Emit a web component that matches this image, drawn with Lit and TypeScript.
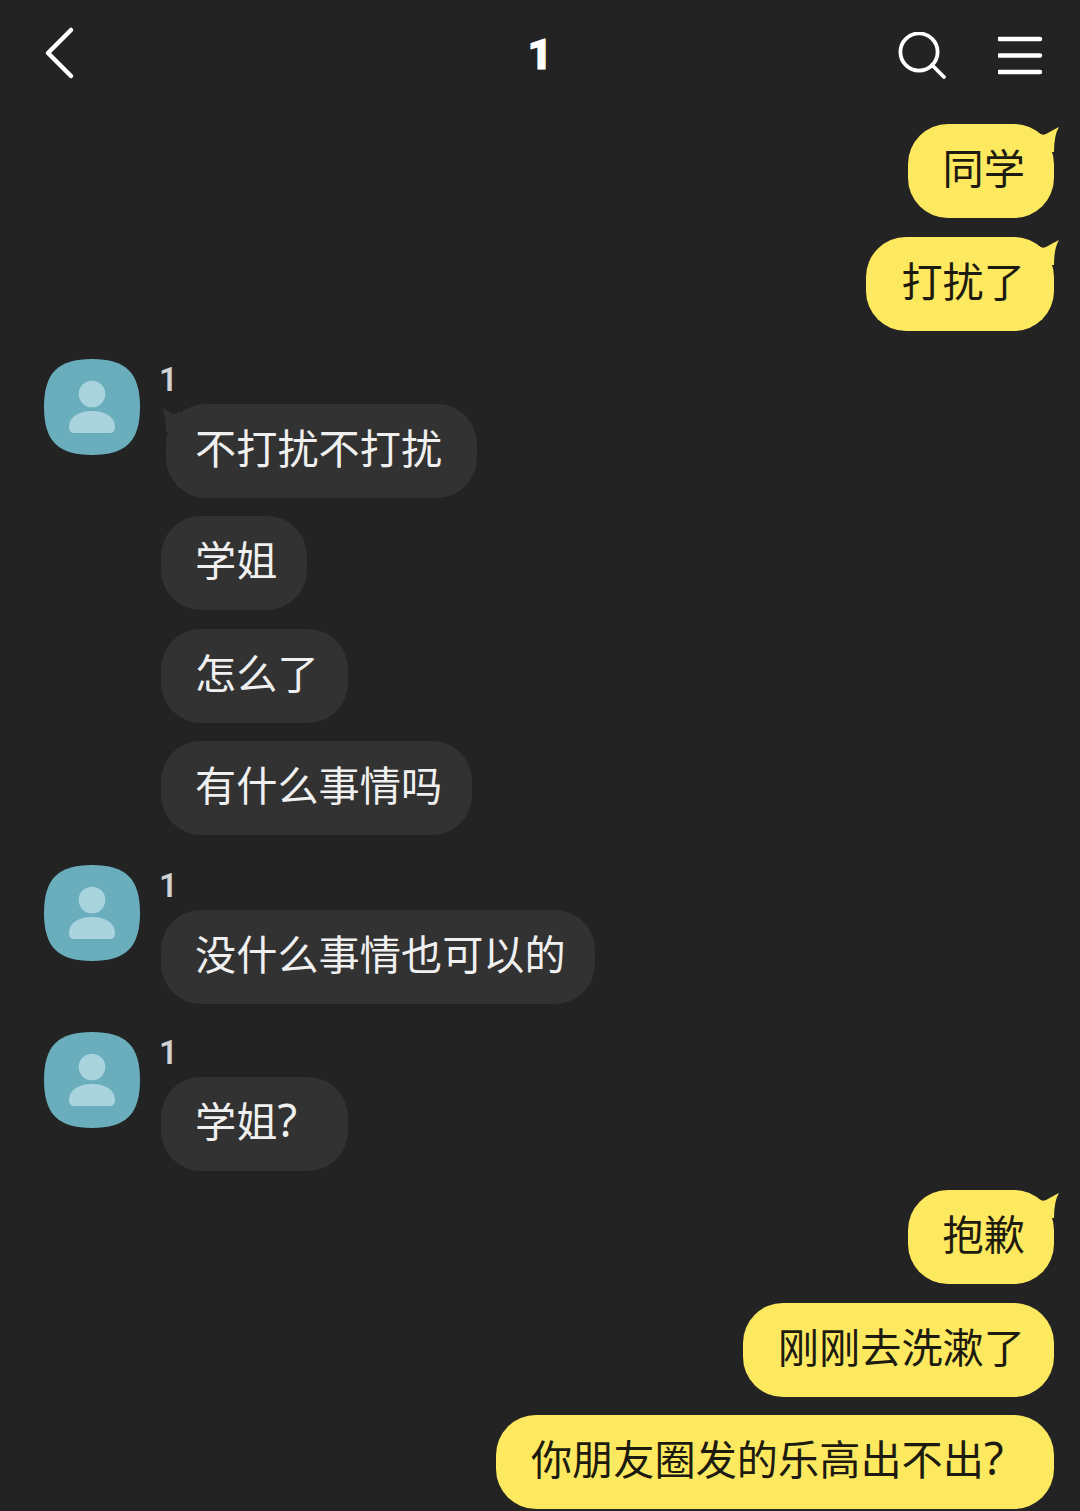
import { LitElement, html, css } from "lit";
import { customElement } from "lit/decorators.js";

const squircle = "M48 0C82 0 96 14 96 48C96 82 82 96 48 96C14 96 0 82 0 48C0 14 14 0 48 0Z";

@customElement("app-root")
export class AppRoot extends LitElement {
  static styles = css`
    :host { display: block; width: 1080px; height: 1511px; overflow: hidden; background: #232323;
      font-family: "Liberation Sans", "Noto Sans CJK SC", sans-serif; }
    .header { height: 124px; display: flex; position: relative; align-items: flex-start; padding: 24px 36px 0 44px; box-sizing: border-box; }
    .back { width: 32px; height: 56px; }
    .title { position: absolute; left: 0; right: 0; top: 29px; text-align: center; color: #fff; font: 900 43px/50px "Roboto", sans-serif; -webkit-text-stroke: 1px #fff; }
    .spacer { flex: 1; }
    .search { width: 52px; height: 56px; margin-right: 48px; margin-top: 8px; }
    .menu { width: 46px; height: 56px; }
    .list { display: flex; flex-direction: column; }
    .mine { display: flex; flex-direction: column; align-items: flex-end; gap: 18.600px; padding-right: 26px; }
    .bubble { position: relative; box-sizing: border-box; height: 94px; border-radius: 40px; font-size: 41.200px; line-height: 92px; white-space: nowrap; }
    .y { background: #fde960; color: #1d1b10; padding: 0 29px 0 35px; }
    .g { background: #323232; color: #f0f0f0; padding: 0 29.500px 0 34px; }
    .tail-r { position: absolute; right: -6px; top: 2px; width: 30px; height: 30px; }
    .tail-l { position: absolute; left: -6px; top: 2px; width: 30px; height: 30px; }
    .group { display: flex; padding-left: 44px; gap: 21px; }
    .avatar { width: 96px; height: 96px; flex: none; }
    .col { display: flex; flex-direction: column; align-items: flex-start; gap: 18.600px; }
    .name { height: 44.600px; margin-bottom: -18.600px; margin-left: -2px; color: #d2d2d2; font: 600 33px/42px "Roboto", sans-serif; }
    .first { margin-left: 5px; padding: 0 34.500px 0 29px; }
    .q { display: inline-block; width: 41px; font: 400 45px/40px "Noto Sans", sans-serif; vertical-align: 0; }
    .g1 { margin-top: 28.400px; }
    .g2 { margin-top: 29.600px; }
    .g3 { margin-top: 28.600px; }
    .m2 { margin-top: 19.200px; }
  `;

  private avatar() {
    return html`<svg class="avatar" viewBox="0 0 96 96">
      <path d=${squircle} fill="#6aaebd"></path>
      <circle cx="48" cy="35" r="13.300" fill="#a9d3dd"></circle>
      <path d="M25 68C25 58 35 52 48 52C61 52 71 58 71 68C71 72 69 74 66 74H30C27 74 25 72 25 68Z" fill="#a9d3dd"></path>
    </svg>`;
  }

  private text(t: string) {
    return t.endsWith("?") ? html`${t.slice(0, -1)}<span class="q">?</span>` : t;
  }

  private mine(t: string, tail = false) {
    return html`<div class="bubble y">${this.text(t)}${tail
      ? html`<svg class="tail-r" viewBox="0 0 30 30"><path d="M9 7Q13 10 17 7.500Q23 4 29 1Q24 9 24 26L9 26Z" fill="#fde960"></path></svg>`
      : ""}</div>`;
  }

  private theirs(t: string, tail = false) {
    return html`<div class="bubble g ${tail ? "first" : ""}">${tail
      ? html`<svg class="tail-l" viewBox="0 0 30 30"><path d="M20 5Q15 9 11 7Q7 5 2 1Q6 9 6 26L20 26Z" fill="#323232"></path></svg>`
      : ""}${this.text(t)}</div>`;
  }

  render() {
    return html`
      <div class="header">
        <svg class="back" viewBox="0 0 32 56" fill="none" stroke="#fff" stroke-width="4.500" stroke-linecap="round" stroke-linejoin="round">
          <path d="M27 6L4 29L27 52"></path>
        </svg>
        <div class="title">1</div>
        <div class="spacer"></div>
        <svg class="search" viewBox="0 0 52 56" fill="none" stroke="#fff" stroke-width="3.800" stroke-linecap="round">
          <circle cx="21" cy="20" r="18.600"></circle>
          <path d="M34 33L46 45"></path>
        </svg>
        <svg class="menu" viewBox="0 0 46 56" fill="none" stroke="#fff" stroke-width="4.500" stroke-linecap="round">
          <path d="M1 15H42M1 31.500H42M1 48H42"></path>
        </svg>
      </div>
      <div class="list">
        <div class="mine">${this.mine("同学", true)}${this.mine("打扰了", true)}</div>
        <div class="group g1">${this.avatar()}<div class="col">
          <div class="name">1</div>
          ${this.theirs("不打扰不打扰", true)}${this.theirs("学姐")}${this.theirs("怎么了")}${this.theirs("有什么事情吗")}
        </div></div>
        <div class="group g2">${this.avatar()}<div class="col">
          <div class="name">1</div>
          ${this.theirs("没什么事情也可以的")}
        </div></div>
        <div class="group g3">${this.avatar()}<div class="col">
          <div class="name">1</div>
          ${this.theirs("学姐?")}
        </div></div>
        <div class="mine m2">${this.mine("抱歉", true)}${this.mine("刚刚去洗漱了")}${this.mine("你朋友圈发的乐高出不出?")}</div>
      </div>
    `;
  }
}
